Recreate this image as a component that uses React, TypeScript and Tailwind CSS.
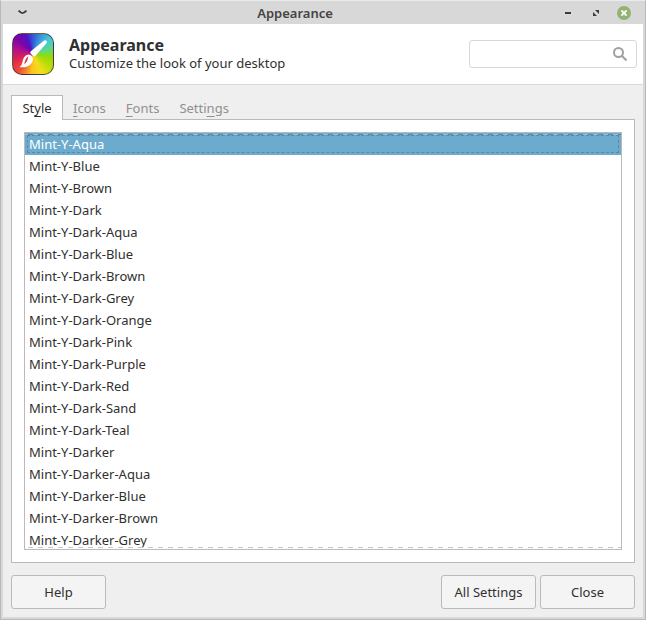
import { useState } from "react";

const themes = [
  "Mint-Y-Aqua", "Mint-Y-Blue", "Mint-Y-Brown", "Mint-Y-Dark", "Mint-Y-Dark-Aqua",
  "Mint-Y-Dark-Blue", "Mint-Y-Dark-Brown", "Mint-Y-Dark-Grey", "Mint-Y-Dark-Orange",
  "Mint-Y-Dark-Pink", "Mint-Y-Dark-Purple", "Mint-Y-Dark-Red", "Mint-Y-Dark-Sand",
  "Mint-Y-Dark-Teal", "Mint-Y-Darker", "Mint-Y-Darker-Aqua", "Mint-Y-Darker-Blue",
  "Mint-Y-Darker-Brown", "Mint-Y-Darker-Grey",
];

// Each label is split around its underlined access key.
const tabs = [
  ["St", "y", "le"],
  ["", "I", "cons"],
  ["", "F", "onts"],
  ["Setti", "n", "gs"],
];

function AppIcon() {
  return (
    <div className="relative size-[42px] shrink-0 rounded-[10px] border border-[#303030]/70 bg-[conic-gradient(from_0deg,#3358d8_0deg,#45c5dc_45deg,#59d98c_72deg,#93dc06_100deg,#b8dd08_125deg,#f6dc1c_155deg,#fac41e_185deg,#ee4c35_220deg,#dc2055_255deg,#b4108c_285deg,#7c03a8_315deg,#5212c4_340deg,#3358d8_360deg)]">
      <svg viewBox="0 0 42 42" className="absolute -inset-px size-[42px]" aria-hidden="true">
        <path d="M34.2 7.800c1 .7.8 1.800.1 2.700L24 22.300c-.8.900-1.700 1.200-2.600.6l-2.600-2.200c-.8-.8-.6-1.900.3-2.700L31.500 8c.9-.7 1.800-.9 2.700-.2Z" fill="#fff" />
        <path d="M16.500 21.500c2.200.2 4.300 1.900 4.500 4.200.2 5.300-5.500 9.600-13.500 8.500 3.300-2.400 2.600-5.500 4-8.600 1-2.200 2.700-3.900 5-4.100Z" fill="#fff" />
        <path d="M16.300 23.200c-2.900 2.300-3.600 4.900-4 8.100 2.300-1.900 3.700-4.600 4-8.100Z" fill="#d93a4c" />
      </svg>
    </div>
  );
}

function PushButton({ children }: { children: string }) {
  return (
    <button className="h-[34px] w-[95px] rounded-[3px] border border-[#bababa] bg-[#f4f4f4]">
      {children}
    </button>
  );
}

export default function App() {
  const [tab, setTab] = useState(0);
  const [selected, setSelected] = useState(0);

  return (
    <div className="flex h-screen flex-col border border-t-[#ebebeb] border-r-[#b8b8b8] border-b-[#b8b8b8] border-l-[#b8b8b8] bg-[#d8d8d8] font-['Noto_Sans',sans-serif] text-[13px] leading-[18px] text-[#303030]">
      <div className="flex h-[23px] shrink-0 items-center px-[14px]">
        <button aria-label="Window menu" className="flex size-[14px] items-center justify-center">
          <svg viewBox="0 0 9 5" className="h-[5px] w-[9px] shrink-0" fill="none" stroke="#3c3c3c" strokeWidth="1.8">
            <path d="M.6.6q3.900 5 7.800 0" />
          </svg>
        </button>
        <h1 className="flex-1 text-center text-[13px] font-semibold text-[#444]">Appearance</h1>
        <div className="flex items-center gap-[14px]">
          <button aria-label="Minimize" className="flex size-[14px] items-center justify-center">
            <span className="h-[2px] w-[6px] bg-[#3c3c3c]" />
          </button>
          <button aria-label="Maximize" className="flex size-[14px] items-center justify-center">
            <svg viewBox="0 0 6 6" className="size-[6px]" fill="#3c3c3c">
              <path d="M2 0H6v4ZM0 2V6h4Z" />
            </svg>
          </button>
          <button aria-label="Close window" className="flex size-[14px] items-center justify-center rounded-full bg-[#92b372]">
            <svg viewBox="0 0 6 6" className="size-[6px]" fill="none" stroke="#fff" strokeWidth="1.8">
              <path d="M.4.4l5.200 5.200M5.600.4.400 5.600" />
            </svg>
          </button>
        </div>
      </div>

      <div className="mx-[2px] mb-[2px] flex min-h-0 flex-1 flex-col bg-[#efefef]">
        <header className="flex h-[61px] shrink-0 items-center justify-between border-b border-[#d8d8d8] bg-white pr-[6px] pl-[9px]">
          <div className="flex items-center gap-[15px]">
            <AppIcon />
            <div>
              <h2 className="text-[16px] leading-[18px] font-bold">Appearance</h2>
              <p>Customize the look of your desktop</p>
            </div>
          </div>
          <label className="flex h-[28px] w-[168px] items-center rounded-[3px] border border-[#d8d8d8] bg-white pr-[9px] pl-2">
            <input type="text" aria-label="Search settings" className="min-w-0 flex-1 outline-none" />
            <svg viewBox="0 0 14 14" className="size-[14px]" fill="none" stroke="#a0a0a0" strokeWidth="2">
              <circle cx="5.5" cy="5.5" r="4.5" />
              <path d="m8.800 8.800 4.700 4.700" />
            </svg>
          </label>
        </header>

        <main className="flex min-h-0 flex-1 flex-col px-[8px] pt-[10px] pb-[8px]">
          <div role="tablist" className="z-10 -mb-px flex h-[25px] shrink-0">
            {tabs.map(([before, key, after], i) => (
              <button
                key={key}
                role="tab"
                aria-selected={tab === i}
                onClick={() => setTab(i)}
                className={
                  tab === i
                    ? "min-w-[52px] border border-b-0 border-[#bababa] bg-white px-[9px]"
                    : "min-w-[52px] border border-b-0 border-transparent px-[9px] text-[#909090]"
                }
              >
                {before}
                <u className="underline-offset-[3px] [text-decoration-skip-ink:none]">{key}</u>
                {after}
              </button>
            ))}
          </div>

          <div role="tabpanel" className="flex min-h-0 flex-1 border border-[#bababa] bg-white p-[12px]">
            <div className="relative flex min-h-0 flex-1 border border-[#bababa]">
              <div role="listbox" aria-label="Styles" className="flex-1 overflow-y-auto [scrollbar-width:none]">
                {themes.map((name, i) => (
                  <button
                    key={name}
                    role="option"
                    aria-selected={selected === i}
                    onClick={() => setSelected(i)}
                    className={
                      selected === i
                        ? "flex h-[22px] w-full bg-[#6cabcd] p-[2px] text-left text-white"
                        : "flex h-[22px] w-full p-[2px] text-left"
                    }
                  >
                    <span
                      className={
                        selected === i
                          ? "flex-1 border border-dashed border-[#568aa5] px-px leading-[16px]"
                          : "flex-1 border border-transparent px-px leading-[16px]"
                      }
                    >
                      {name}
                    </span>
                  </button>
                ))}
              </div>
              <div className="pointer-events-none absolute inset-x-0 top-px h-px bg-[repeating-linear-gradient(90deg,#8cc4e2_0_3px,#568aa5_3px_8px,#8cc4e2_8px_10px)]" />
              <div className="pointer-events-none absolute inset-x-0 bottom-px h-px bg-[repeating-linear-gradient(90deg,transparent_0_3px,#c8c8c8_3px_8px,transparent_8px_10px)]" />
            </div>
          </div>

          <footer className="mt-[12px] flex shrink-0 justify-between">
            <PushButton>Help</PushButton>
            <div className="flex gap-1">
              <PushButton>All Settings</PushButton>
              <PushButton>Close</PushButton>
            </div>
          </footer>
        </main>
      </div>
    </div>
  );
}
